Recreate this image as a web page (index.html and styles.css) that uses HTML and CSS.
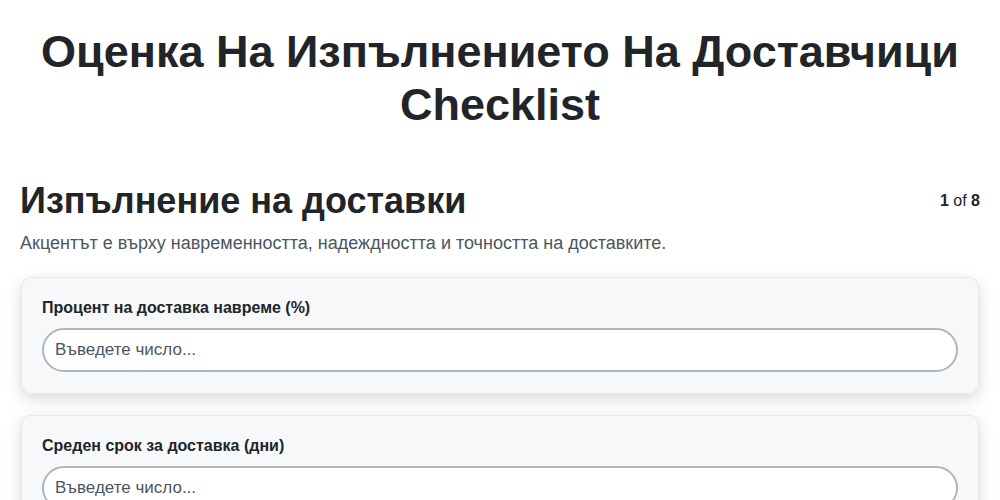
FILE: index.html
```html
<!DOCTYPE html>
<html lang="bg">
<head>
    <meta charset="UTF-8">
    <meta name="viewport" content="width=device-width, initial-scale=1.0">
    <title>Оценка На Изпълнението На Доставчици Checklist</title>
    <link rel="stylesheet" href="styles.css">
</head>
<body>

    <div class="page">
        <h1 class="page-title">Оценка На Изпълнението На Доставчици Checklist</h1>

        <div class="section-head">
            <h2>Изпълнение на доставки</h2>
            <span class="step"><b>1</b> of <b>8</b></span>
        </div>
        <p class="section-desc">Акцентът е върху навременността, надеждността и точността на доставките.</p>

        <div class="card">
            <label for="q1">Процент на доставка навреме (%)</label>
            <input type="number" id="q1" placeholder="Въведете число...">
        </div>

        <div class="card">
            <label for="q2">Среден срок за доставка (дни)</label>
            <input type="number" id="q2" placeholder="Въведете число...">
        </div>
    </div>

</body>
</html>
```

FILE: styles.css
```css
/* General reset */
* {
    margin: 0;
    padding: 0;
    box-sizing: border-box;
}

body {
    background: #ffffff;
    color: #212529;
    font-family: "Liberation Sans", Arial, sans-serif;
}

.page {
    padding: 25px 20px 40px;
}

.page-title {
    font-size: 45px;
    line-height: 53px;
    text-align: center;
    color: #212529;
    margin-bottom: 48px;
}

/* Section header */
.section-head {
    display: flex;
    justify-content: space-between;
    align-items: center;
}

.section-head h2 {
    font-size: 36px;
    line-height: 43px;
}

.step {
    font-size: 16px;
    color: #212529;
}

.section-desc {
    font-size: 18px;
    line-height: 21px;
    color: #4b5563;
    margin-top: 11px;
    margin-bottom: 23px;
}

/* Question cards */
.card {
    background-color: #f7f8fa;
    border: 1px solid #e5e7eb;
    border-radius: 10px;
    box-shadow: 0 5px 16px rgba(0, 0, 0, 0.15);
    padding: 20px 20px 21px;
    margin: 0 1px 21px;
}

.card label {
    display: block;
    font-size: 16px;
    font-weight: bold;
    line-height: 20px;
    margin-bottom: 10px;
}

.card input {
    display: block;
    width: 100%;
    height: 44px;
    padding: 0 11px;
    border: 2px solid #adb5bd;
    border-radius: 22px;
    background: #ffffff;
    font-family: inherit;
    font-size: 17px;
    color: #212529;
}

.card input::placeholder {
    color: #4b5563;
}
```
